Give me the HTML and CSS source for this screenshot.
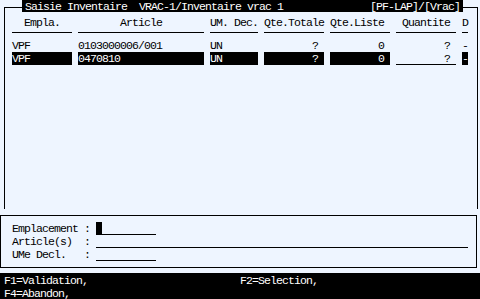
FILE: index.html
```html
<!DOCTYPE html>
<html lang="fr">
<head>
  <meta charset="UTF-8">
  <title>Saisie Inventaire</title>
  <link rel="stylesheet" href="styles.css">
</head>
<body>
  <div class="screen">

    <div class="frame">
      <div class="title-row">
        <div class="title">
          <span>Saisie Inventaire  VRAC-1/Inventaire vrac 1</span>
          <span>[PF-LAP]/[Vrac]</span>
        </div>
      </div>

      <div class="row head">
        <div class="c1">Empla.</div>
        <div class="c2">Article</div>
        <div class="c3">UM. Dec.</div>
        <div class="c4">Qte.Totale</div>
        <div class="c5 left">Qte.Liste</div>
        <div class="c6">Quantite</div>
        <div class="c7">D</div>
      </div>

      <div class="row rule">
        <div class="c1"></div>
        <div class="c2"></div>
        <div class="c3"></div>
        <div class="c4"></div>
        <div class="c5"></div>
        <div class="c6"></div>
        <div class="c7"></div>
      </div>

      <div class="row">
        <div class="c1">VPF</div>
        <div class="c2">0103000006/001</div>
        <div class="c3">UN</div>
        <div class="c4 num">?</div>
        <div class="c5 num">0</div>
        <div class="c6 num">?</div>
        <div class="c7">-</div>
      </div>

      <div class="row sel">
        <div class="c1 inv">VPF</div>
        <div class="c2 inv">0470810</div>
        <div class="c3 inv">UN</div>
        <div class="c4 inv num">?</div>
        <div class="c5 inv num">0</div>
        <div class="c6 num field">?</div>
        <div class="c7 inv">-</div>
      </div>
    </div>

    <div class="entry">
      <div class="line">
        <span class="label">Emplacement</span><span class="colon">:</span>
        <span class="input short"><span class="cursor"></span></span>
      </div>
      <div class="line">
        <span class="label">Article(s)</span><span class="colon">:</span>
        <span class="input long"></span>
      </div>
      <div class="line">
        <span class="label">UMe Decl.</span><span class="colon">:</span>
        <span class="input short"></span>
      </div>
    </div>

    <div class="keys">
      <div class="key-line"><span class="key">F1=Validation,</span><span class="key">F2=Selection,</span></div>
      <div class="key-line"><span class="key">F4=Abandon,</span></div>
    </div>

  </div>
</body>
</html>
```

FILE: styles.css
```css
body {
  margin: 0;
  background-color: #eef5ff;
}

.screen {
  width: 480px;
  height: 299px;
  overflow: hidden;
  background-color: #eef5ff;
  color: #000;
  font-family: "Liberation Mono", "DejaVu Sans Mono", monospace;
  font-size: 11.5px;
  line-height: 13px;
  letter-spacing: -0.9px;
}

/* main window */
.frame {
  height: 201px;
  margin: 7px 2px 0 4px;
  padding-left: 7px;
  border: 1px solid #000;
  border-bottom: none;
}

.title-row {
  display: flex;
  margin: -8px 14px 0 10px;
  height: 13px;
}

.title {
  flex: 1;
  display: flex;
  justify-content: space-between;
  height: 12px;
  line-height: 13px;
  padding: 0 3px;
  background-color: #000;
  color: #fff;
  white-space: pre;
}

.row {
  display: flex;
  gap: 6px;
  height: 13px;
}

.c1 { width: 60px; }
.c2 { width: 126px; }
.c3 { width: 48px; }
.c4 { width: 60px; }
.c5 { width: 60px; }
.c6 { width: 60px; }
.c7 { width: 6px; }

.head {
  padding-top: 3px;
  height: 10px;
}

.head > div {
  text-align: center;
  white-space: nowrap;
}

.head > .left {
  text-align: left;
}

.rule > div {
  height: 6px;
  border-bottom: 1px solid #000;
}

.num {
  text-align: right;
  padding-right: 6px;
  box-sizing: border-box;
}

.inv {
  background-color: #000;
  color: #fff;
}

.field {
  border-bottom: 1px solid #000;
}

/* entry box */
.entry {
  margin: 6px 3px 0 0;
  padding: 6px 0 6px 11px;
  border: 1px solid #000;
}

.line {
  display: flex;
  height: 13px;
}

.label {
  width: 72px;
}

.colon {
  width: 12px;
}

.input {
  display: flex;
  height: 12px;
  border-bottom: 1px solid #000;
}

.input.short {
  width: 60px;
}

.input.long {
  width: 372px;
}

.cursor {
  width: 6px;
  height: 13px;
  background-color: #000;
}

/* function keys */
.keys {
  margin-top: 5px;
  padding: 1px 0 0 4px;
  height: 27px;
  background-color: #000;
  color: #fff;
}

.key-line {
  display: flex;
}

.key {
  width: 236px;
}
```
